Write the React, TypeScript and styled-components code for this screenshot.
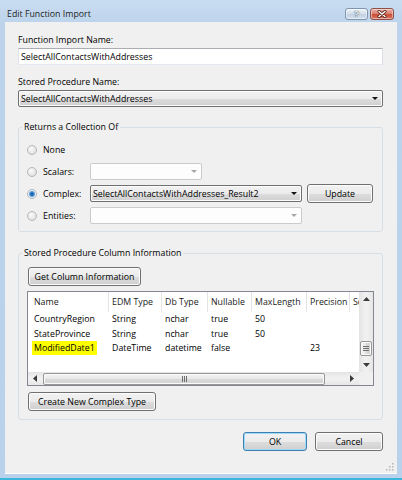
import React from 'react'
import styled, { createGlobalStyle } from 'styled-components'

const GlobalStyle = createGlobalStyle`
  html, body {
    margin: 0;
    padding: 0;
    background: #b9d1ea;
  }
  body {
    font-family: 'Open Sans', 'Liberation Sans', sans-serif;
    font-size: 8.8px;
    color: #000;
  }
  * {
    box-sizing: border-box;
  }
`

const Window = styled.div`
  width: 402px;
  height: 480px;
  display: flex;
  flex-direction: column;
  padding: 0 5px 4px;
  background: linear-gradient(#c9ddf1 0, #bcd3eb 24px, #b9d1ea 100%);
  border-bottom: 2px solid #3cb6dc;
  overflow: hidden;
`

const TitleBar = styled.div`
  height: 22px;
  flex: none;
  padding: 6px 3px 0 2px;
  display: flex;
  align-items: center;
`

const TitleText = styled.div`
  flex: 1;
  line-height: 16px;
  color: #1e1e1e;
`

const CaptionButtons = styled.div`
  display: flex;
  gap: 2px;
`

const CaptionButton = styled.div<{ $close?: boolean }>`
  width: ${({ $close }) => ($close ? 24 : 23)}px;
  height: 12px;
  border-radius: 3px;
  display: flex;
  align-items: center;
  justify-content: center;
  border: 1px solid ${({ $close }) => ($close ? '#8d5048' : '#7f95ae')};
  background: ${({ $close }) =>
    $close
      ? 'linear-gradient(#eab0a4 0%, #dc8473 45%, #c8503a 55%, #d9745f 100%)'
      : 'linear-gradient(#eef3f9 0%, #d5e0ec 45%, #c2d2e3 55%, #d3e0ee 100%)'};
  box-shadow: inset 0 0 0 1px rgba(255, 255, 255, 0.45);
`

const HelpGlyph = styled.span`
  font-family: 'Liberation Sans', sans-serif;
  font-weight: bold;
  font-size: 9px;
  line-height: 10px;
  color: #f4f7fb;
  text-shadow: 0 0 1px #3d4f66, 0 0 1px #3d4f66;
`

const Client = styled.div`
  position: relative;
  flex: 1;
  display: flex;
  flex-direction: column;
  padding: 11px 14px 0 13px;
  background: #f0f0f0;
  box-shadow: inset 0 -1px 0 #fafcfe;
`

const FieldLabel = styled.div`
  line-height: 14px;
  margin-bottom: 1px;
`

const TextBox = styled.div`
  height: 17px;
  display: flex;
  align-items: center;
  padding: 0 2px;
  background: #fff;
  border: 1px solid;
  border-color: #abadb3 #dbdfe6 #e3e9ef #e2e3ea;
  margin-bottom: 10px;
`

const Combo = styled.div<{ $width?: number; $disabled?: boolean }>`
  height: 17px;
  width: ${({ $width }) => ($width ? `${$width}px` : '100%')};
  flex: none;
  display: flex;
  align-items: center;
  padding: 0 4px 0 2px;
  border: 1px solid ${({ $disabled }) => ($disabled ? '#c9cccf' : '#707070')};
  border-radius: 2px;
  background: ${({ $disabled }) =>
    $disabled ? '#fdfdfd' : 'linear-gradient(#f2f2f2 0%, #ebebeb 50%, #dddddd 51%, #cfcfcf 100%)'};
  box-shadow: ${({ $disabled }) => ($disabled ? 'none' : 'inset 0 0 0 1px #fcfcfc')};
`

const ComboText = styled.span`
  flex: 1;
  white-space: nowrap;
  overflow: hidden;
`

const ComboArrow = styled.span<{ $disabled?: boolean }>`
  width: 0;
  height: 0;
  border-left: 3px solid transparent;
  border-right: 3px solid transparent;
  border-top: 3px solid ${({ $disabled }) => ($disabled ? '#a7a7a7' : '#111')};
`

const GroupBox = styled.fieldset<{ $gap: number }>`
  margin: ${({ $gap }) => $gap}px 0 0;
  padding: 0 3px;
  min-width: 0;
  border: 1px solid #d5dfe5;
  border-radius: 3px;
`

const GroupTitle = styled.legend`
  padding: 0 2px;
  line-height: 14px;
`

const RadioList = styled.div`
  display: flex;
  flex-direction: column;
  gap: 5px;
  padding: 7px 6px 7px 4px;
`

const RadioRow = styled.div`
  height: 17px;
  display: flex;
  align-items: center;
`

const RadioOption = styled.label`
  width: 64px;
  flex: none;
  display: flex;
  align-items: center;
  gap: 6px;
`

const RadioCircle = styled.span<{ $checked?: boolean }>`
  width: 10px;
  height: 10px;
  margin-left: 1px;
  border-radius: 50%;
  border: 1px solid #b3b7bb;
  background: ${({ $checked }) =>
    $checked
      ? 'radial-gradient(circle, #0f4c8a 0, #2f7bc2 1.6px, #74b2e6 2.8px, #e9edf1 3.3px, #f6f6f6 100%)'
      : 'radial-gradient(circle at 40% 35%, #fbfbfb 0, #e6e6e6 60%, #d6d6d6 100%)'};
`

const Button = styled.div<{ $width: number; $default?: boolean }>`
  width: ${({ $width }) => $width}px;
  height: 19px;
  flex: none;
  display: flex;
  align-items: center;
  justify-content: center;
  white-space: nowrap;
  border: 1px solid ${({ $default }) => ($default ? '#3c7fb1' : '#707070')};
  border-radius: 3px;
  background: linear-gradient(#f2f2f2 0%, #ebebeb 50%, #dddddd 51%, #cfcfcf 100%);
  box-shadow: inset 0 0 0 1px ${({ $default }) => ($default ? '#9fdaf8' : '#fcfcfc')};
`

const UpdateButton = styled(Button)`
  margin-left: 5px;
`

const ColumnBody = styled.div`
  display: flex;
  flex-direction: column;
  padding: 7px 5px 8px 5px;
`

const LeftButton = styled(Button)<{ $top?: number }>`
  margin: ${({ $top }) => $top ?? 0}px 0 0 1px;
`

const ListView = styled.div`
  margin-top: 5px;
  height: 95px;
  display: grid;
  grid-template-columns: 1fr 14px;
  grid-template-rows: 1fr 13px;
  border: 1px solid #828790;
  background: #fff;
`

const ListContent = styled.div`
  overflow: hidden;
  min-width: 0;
`

const COLUMNS = '81px 53px 46px 44px 55px 43px 40px'

const HeaderRow = styled.div`
  height: 20px;
  display: grid;
  grid-template-columns: ${COLUMNS};
  width: max-content;
`

const HeaderCell = styled.div`
  display: flex;
  align-items: center;
  padding-left: 3px;
  border-right: 1px solid #e5e5e5;
  white-space: nowrap;
  overflow: hidden;
  color: #1a1a1a;

  &:first-child {
    padding-left: 6px;
  }
`

const DataRow = styled.div`
  height: 14.5px;
  display: grid;
  grid-template-columns: ${COLUMNS};
  width: max-content;
`

const DataCell = styled.div`
  display: flex;
  align-items: center;
  padding-left: 3px;
  white-space: nowrap;
  overflow: hidden;

  &:first-child {
    padding-left: 6px;
  }
`

const Highlight = styled.span`
  background: #ffff00;
  margin-left: -2px;
  padding: 1px 2px;
`

const VScroll = styled.div`
  display: flex;
  flex-direction: column;
  background: linear-gradient(90deg, #e3e3e3, #f0f0f0 40%, #f0f0f0 60%, #e6e6e6);
`

const HScroll = styled.div`
  display: flex;
  background: linear-gradient(#e3e3e3, #f0f0f0 40%, #f0f0f0 60%, #e6e6e6);
`

const ScrollArrow = styled.div<{ $size: 'v' | 'h' }>`
  flex: none;
  width: ${({ $size }) => ($size === 'h' ? '14px' : '100%')};
  height: ${({ $size }) => ($size === 'v' ? '14px' : '100%')};
  display: flex;
  align-items: center;
  justify-content: center;
`

const VTrack = styled.div`
  flex: 1;
  display: flex;
  flex-direction: column;
  justify-content: flex-end;
  align-items: center;
`

const HTrack = styled.div`
  flex: 1;
  display: flex;
  align-items: center;
`

const Thumb = styled.div`
  display: flex;
  align-items: center;
  justify-content: center;
  border: 1px solid #979797;
  border-radius: 2px;
  background: linear-gradient(90deg, #f3f3f3, #e8e8e8 50%, #d9d9d9 51%, #d4d4d4);
  box-shadow: inset 0 0 0 1px #fafafa;
`

const VThumb = styled(Thumb)`
  width: 12px;
  height: 15px;
  margin-bottom: 2px;
`

const HThumb = styled(Thumb)`
  width: 282px;
  height: 12px;
  margin-left: 1px;
  background: linear-gradient(#f3f3f3, #e8e8e8 50%, #d9d9d9 51%, #d4d4d4);
`

const ScrollCorner = styled.div`
  background: #f0f0f0;
`

const Footer = styled.div`
  margin-top: 12px;
  display: flex;
  justify-content: flex-end;
  gap: 8px;
`

const Grip = styled.svg`
  position: absolute;
  right: 3px;
  bottom: 3px;
`

const Arrow = ({ dir }: { dir: 'up' | 'down' | 'left' | 'right' }) => {
  const points = {
    up: '0,4 3.5,0 7,4',
    down: '0,0 3.5,4 7,0',
    left: '4,0 0,3.5 4,7',
    right: '0,0 4,3.5 0,7',
  }[dir]
  const vertical = dir === 'up' || dir === 'down'
  return (
    <svg width={vertical ? 7 : 4} height={vertical ? 4 : 7} viewBox={vertical ? '0 0 7 4' : '0 0 4 7'}>
      <polygon points={points} fill="#3a3a3a" />
    </svg>
  )
}

const headers = ['Name', 'EDM Type', 'Db Type', 'Nullable', 'MaxLength', 'Precision', 'Scale']

const rows = [
  ['CountryRegion', 'String', 'nchar', 'true', '50', '', ''],
  ['StateProvince', 'String', 'nchar', 'true', '50', '', ''],
  ['ModifiedDate1', 'DateTime', 'datetime', 'false', '', '23', ''],
]

const options: { label: string; checked?: boolean; combo?: string; width: number; disabled?: boolean }[] = [
  { label: 'None', width: 0 },
  { label: 'Scalars:', width: 112, disabled: true },
  { label: 'Complex:', width: 212, checked: true, combo: 'SelectAllContactsWithAddresses_Result2' },
  { label: 'Entities:', width: 212, disabled: true },
]

export default function App() {
  return (
    <>
      <GlobalStyle />
      <Window>
        <TitleBar>
          <TitleText>Edit Function Import</TitleText>
          <CaptionButtons>
            <CaptionButton>
              <HelpGlyph>?</HelpGlyph>
            </CaptionButton>
            <CaptionButton $close>
              <svg width="10" height="8" viewBox="0 0 10 8">
                <path d="M2 1.5 L8 6.5 M8 1.5 L2 6.5" stroke="#5a2418" strokeWidth="3" strokeLinecap="round" />
                <path d="M2 1.5 L8 6.5 M8 1.5 L2 6.5" stroke="#ffffff" strokeWidth="1.5" strokeLinecap="round" />
              </svg>
            </CaptionButton>
          </CaptionButtons>
        </TitleBar>

        <Client>
          <FieldLabel>Function Import Name:</FieldLabel>
          <TextBox>SelectAllContactsWithAddresses</TextBox>

          <FieldLabel>Stored Procedure Name:</FieldLabel>
          <Combo>
            <ComboText>SelectAllContactsWithAddresses</ComboText>
            <ComboArrow />
          </Combo>

          <GroupBox $gap={13}>
            <GroupTitle>Returns a Collection Of</GroupTitle>
            <RadioList>
              {options.map((opt) => (
                <RadioRow key={opt.label}>
                  <RadioOption>
                    <RadioCircle $checked={opt.checked} />
                    {opt.label}
                  </RadioOption>
                  {opt.width > 0 && (
                    <Combo $width={opt.width} $disabled={opt.disabled}>
                      <ComboText>{opt.combo}</ComboText>
                      <ComboArrow $disabled={opt.disabled} />
                    </Combo>
                  )}
                  {opt.checked && <UpdateButton $width={66}>Update</UpdateButton>}
                </RadioRow>
              ))}
            </RadioList>
          </GroupBox>

          <GroupBox $gap={14}>
            <GroupTitle>Stored Procedure Column Information</GroupTitle>
            <ColumnBody>
              <LeftButton $width={113}>Get Column Information</LeftButton>
              <ListView>
                <ListContent>
                  <HeaderRow>
                    {headers.map((h) => (
                      <HeaderCell key={h}>{h}</HeaderCell>
                    ))}
                  </HeaderRow>
                  {rows.map((row, index) => (
                    <DataRow key={index}>
                      {row.map((col, colIndex) => (
                        <DataCell key={`col-${index}-${colIndex}`}>
                          {col === 'ModifiedDate1' ? <Highlight>{col}</Highlight> : col}
                        </DataCell>
                      ))}
                    </DataRow>
                  ))}
                </ListContent>
                <VScroll>
                  <ScrollArrow $size="v">
                    <Arrow dir="up" />
                  </ScrollArrow>
                  <VTrack>
                    <VThumb>
                      <svg width="6" height="5" viewBox="0 0 6 5">
                        <path d="M0 0.5 H6 M0 2.5 H6 M0 4.5 H6" stroke="#6e6e6e" strokeWidth="1" />
                      </svg>
                    </VThumb>
                  </VTrack>
                  <ScrollArrow $size="v">
                    <Arrow dir="down" />
                  </ScrollArrow>
                </VScroll>
                <HScroll>
                  <ScrollArrow $size="h">
                    <Arrow dir="left" />
                  </ScrollArrow>
                  <HTrack>
                    <HThumb>
                      <svg width="5" height="6" viewBox="0 0 5 6">
                        <path d="M0.5 0 V6 M2.5 0 V6 M4.5 0 V6" stroke="#6e6e6e" strokeWidth="1" />
                      </svg>
                    </HThumb>
                  </HTrack>
                  <ScrollArrow $size="h">
                    <Arrow dir="right" />
                  </ScrollArrow>
                </HScroll>
                <ScrollCorner />
              </ListView>
              <LeftButton $width={128} $top={6}>
                Create New Complex Type
              </LeftButton>
            </ColumnBody>
          </GroupBox>

          <Footer>
            <Button $width={64} $default>
              OK
            </Button>
            <Button $width={68}>Cancel</Button>
          </Footer>

          <Grip width="8" height="8" viewBox="0 0 8 8">
            <g fill="#b5b5b5">
              <rect x="6" y="0" width="1.5" height="1.5" />
              <rect x="3" y="3" width="1.5" height="1.5" />
              <rect x="6" y="3" width="1.5" height="1.5" />
              <rect x="0" y="6" width="1.5" height="1.5" />
              <rect x="3" y="6" width="1.5" height="1.5" />
              <rect x="6" y="6" width="1.5" height="1.5" />
            </g>
          </Grip>
        </Client>
      </Window>
    </>
  )
}
